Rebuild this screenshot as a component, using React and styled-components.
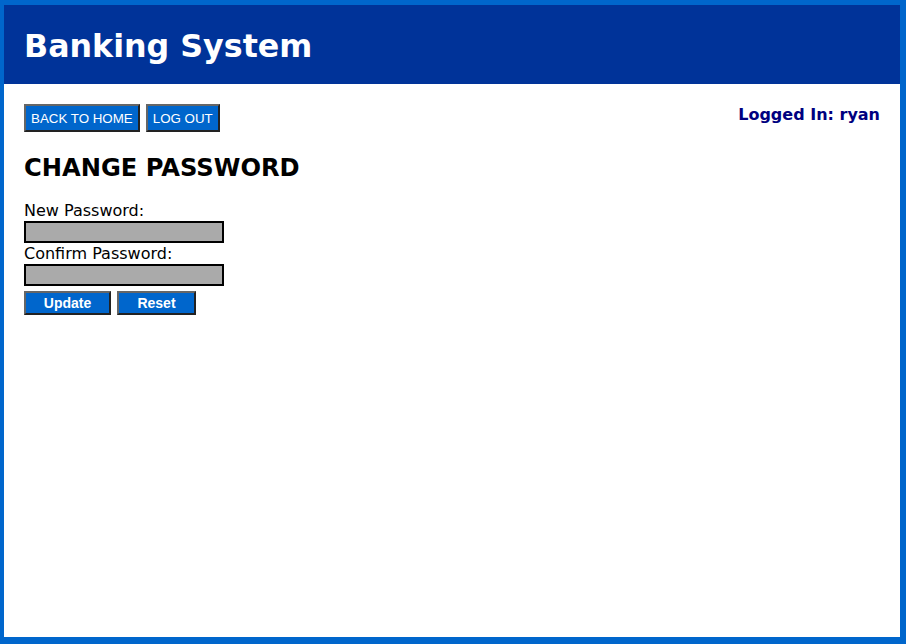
import styled, { createGlobalStyle } from 'styled-components';

const GlobalStyle = createGlobalStyle`
  html, body {
    margin: 0;
    padding: 0;
    background: #ffffff;
  }
`;

const App = () => {
  return (
    <>
      <GlobalStyle />
      <Frame>
        <Header>
          <SiteTitle>Banking System</SiteTitle>
        </Header>
        <Main>
          <TopBar>
            <NavButtons>
              <NavButton>BACK TO HOME</NavButton>
              <NavButton>LOG OUT</NavButton>
            </NavButtons>
            <LoggedIn>Logged In: ryan</LoggedIn>
          </TopBar>
          <PageTitle>CHANGE PASSWORD</PageTitle>
          <Form>
            <Label htmlFor="newpw">New Password:</Label>
            <Input id="newpw" type="password" />
            <Label htmlFor="confirmpw">Confirm Password:</Label>
            <Input id="confirmpw" type="password" />
            <Actions>
              <ActionButton wide={87}>Update</ActionButton>
              <ActionButton wide={79} type="reset">Reset</ActionButton>
            </Actions>
          </Form>
        </Main>
      </Frame>
    </>
  );
};

const Frame = styled.div`
  box-sizing: border-box;
  height: 100vh;
  border-style: solid;
  border-color: #0066cc;
  border-width: 5px 6px 7px 4px;
  display: flex;
  flex-direction: column;
  font-family: 'DejaVu Sans', Verdana, sans-serif;
`;

const Header = styled.div`
  background-color: #003399;
  height: 79px;
  display: flex;
  align-items: center;
  padding: 0 20px;
`;

const SiteTitle = styled.h1`
  margin: 0;
  color: #ffffff;
  font-size: 31.7px;
  font-weight: bold;
  padding-top: 2px;
`;

const Main = styled.div`
  padding: 20px 20px 0 20px;
`;

const TopBar = styled.div`
  display: flex;
  justify-content: space-between;
  align-items: flex-start;
`;

const NavButtons = styled.div`
  display: flex;
  gap: 6px;
`;

const NavButton = styled.button`
  height: 28px;
  padding: 0 5px;
  background-color: #0066cc;
  color: #ffffff;
  font-family: 'Liberation Sans', Arial, sans-serif;
  font-size: 13.33px;
  border: 2px solid;
  border-color: #666666 #222222 #222222 #666666;
  cursor: pointer;
`;

const LoggedIn = styled.div`
  color: #000080;
  font-weight: bold;
  font-size: 16px;
  margin-top: 1px;
`;

const PageTitle = styled.h2`
  margin: 22px 0 18px 0;
  font-size: 24.2px;
  font-weight: bold;
  color: #000000;
`;

const Form = styled.form`
  display: flex;
  flex-direction: column;
  align-items: flex-start;
`;

const Label = styled.label`
  font-size: 16px;
  line-height: 21px;
  color: #000000;
`;

const Input = styled.input`
  box-sizing: border-box;
  width: 200px;
  height: 22px;
  margin: 0;
  border: 2px solid #000000;
  background-color: #aaaaaa;
`;

const Actions = styled.div`
  display: flex;
  gap: 6px;
  margin-top: 5px;
`;

const ActionButton = styled.button`
  box-sizing: border-box;
  width: ${props => props.wide}px;
  height: 24px;
  padding: 0;
  background-color: #0066cc;
  color: #ffffff;
  font-family: 'Liberation Sans', Arial, sans-serif;
  font-weight: bold;
  font-size: 14px;
  border: 2px solid;
  border-color: #666666 #222222 #222222 #666666;
  cursor: pointer;
`;

export default App;
